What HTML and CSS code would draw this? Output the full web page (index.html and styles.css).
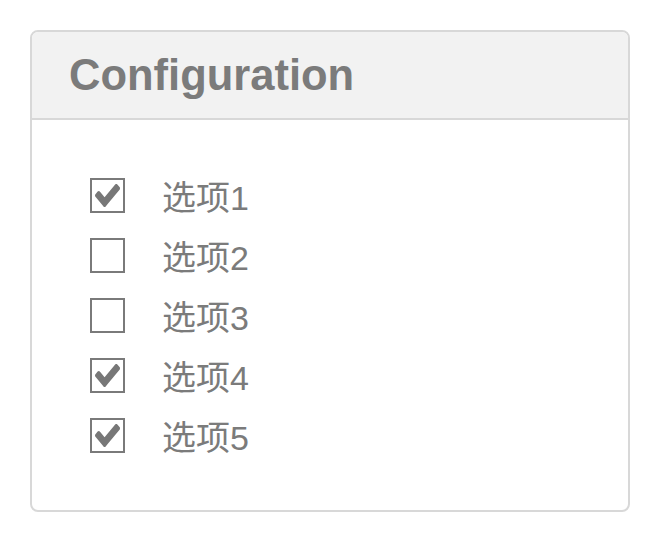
FILE: index.html
```html
<!DOCTYPE html>
<html lang="zh">
  <head>
    <meta charset="UTF-8" />
    <meta name="viewport" content="width=device-width, initial-scale=1.0" />
    <title>Configuration</title>
    <link rel="stylesheet" href="styles.css">
  </head>
  <body>
    <div class="panel">
      <div class="panel-heading">
        <h3 class="panel-title">Configuration</h3>
      </div>
      <div class="panel-body">
        <label class="option">
          <span class="box checked">
            <svg viewBox="121 338 1550 1184" preserveAspectRatio="none" aria-hidden="true"><path d="M1671 566q0 40-28 68l-724 724-136 136q-28 28-68 28t-68-28l-136-136-362-362q-28-28-28-68t28-68l136-136q28-28 68-28t68 28l294 295 656-657q28-28 68-28t68 28l136 136q28 28 28 68z"/></svg>
          </span>
          <span class="option-text">选项1</span>
        </label>
        <label class="option">
          <span class="box"></span>
          <span class="option-text">选项2</span>
        </label>
        <label class="option">
          <span class="box"></span>
          <span class="option-text">选项3</span>
        </label>
        <label class="option">
          <span class="box checked">
            <svg viewBox="121 338 1550 1184" preserveAspectRatio="none" aria-hidden="true"><path d="M1671 566q0 40-28 68l-724 724-136 136q-28 28-68 28t-68-28l-136-136-362-362q-28-28-28-68t28-68l136-136q28-28 68-28t68 28l294 295 656-657q28-28 68-28t68 28l136 136q28 28 28 68z"/></svg>
          </span>
          <span class="option-text">选项4</span>
        </label>
        <label class="option">
          <span class="box checked">
            <svg viewBox="121 338 1550 1184" preserveAspectRatio="none" aria-hidden="true"><path d="M1671 566q0 40-28 68l-724 724-136 136q-28 28-68 28t-68-28l-136-136-362-362q-28-28-28-68t28-68l136-136q28-28 68-28t68 28l294 295 656-657q28-28 68-28t68 28l136 136q28 28 28 68z"/></svg>
          </span>
          <span class="option-text">选项5</span>
        </label>
      </div>
    </div>
  </body>
</html>
```

FILE: styles.css
```css
body {
  margin: 0;
  padding: 30px;
  font-family: "Liberation Sans", "Noto Sans CJK SC", sans-serif;
  color: #777;
  background: #fff;
}

.panel {
  width: 600px;
  box-sizing: border-box;
  border: 2px solid #d8d8d8;
  border-radius: 8px;
  overflow: hidden;
}

.panel-heading {
  height: 86px;
  background-color: #f2f2f2;
  border-bottom: 2px solid #d8d8d8;
  display: flex;
  align-items: center;
  padding-left: 37px;
}

.panel-title {
  margin: 0;
  font-size: 43.5px;
  font-weight: bold;
  color: #7b7b7b;
}

.panel-body {
  padding: 45px 58px;
}

.option {
  display: flex;
  align-items: center;
  height: 60px;
  cursor: pointer;
}

.box {
  width: 35px;
  height: 35px;
  box-sizing: border-box;
  border: 2px solid #7a7a7a;
  display: flex;
  align-items: center;
  justify-content: center;
}

.box svg {
  width: 25px;
  height: 23px;
  fill: #777;
}

.option-text {
  margin-left: 37px;
  font-size: 34px;
  color: #7b7b7b;
}
```
